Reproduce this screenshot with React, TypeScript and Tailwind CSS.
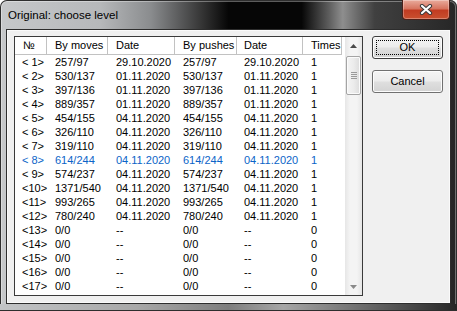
import React from 'react';

type Row = { no: string; moves: string; mDate: string; pushes: string; pDate: string; times: string; sel?: boolean };

const rows: Row[] = [
  { no: '< 1>', moves: '257/97', mDate: '29.10.2020', pushes: '257/97', pDate: '29.10.2020', times: '1' },
  { no: '< 2>', moves: '530/137', mDate: '01.11.2020', pushes: '530/137', pDate: '01.11.2020', times: '1' },
  { no: '< 3>', moves: '397/136', mDate: '01.11.2020', pushes: '397/136', pDate: '01.11.2020', times: '1' },
  { no: '< 4>', moves: '889/357', mDate: '01.11.2020', pushes: '889/357', pDate: '01.11.2020', times: '1' },
  { no: '< 5>', moves: '454/155', mDate: '04.11.2020', pushes: '454/155', pDate: '04.11.2020', times: '1' },
  { no: '< 6>', moves: '326/110', mDate: '04.11.2020', pushes: '326/110', pDate: '04.11.2020', times: '1' },
  { no: '< 7>', moves: '319/110', mDate: '04.11.2020', pushes: '319/110', pDate: '04.11.2020', times: '1' },
  { no: '< 8>', moves: '614/244', mDate: '04.11.2020', pushes: '614/244', pDate: '04.11.2020', times: '1', sel: true },
  { no: '< 9>', moves: '574/237', mDate: '04.11.2020', pushes: '574/237', pDate: '04.11.2020', times: '1' },
  { no: '<10>', moves: '1371/540', mDate: '04.11.2020', pushes: '1371/540', pDate: '04.11.2020', times: '1' },
  { no: '<11>', moves: '993/265', mDate: '04.11.2020', pushes: '993/265', pDate: '04.11.2020', times: '1' },
  { no: '<12>', moves: '780/240', mDate: '04.11.2020', pushes: '780/240', pDate: '04.11.2020', times: '1' },
  { no: '<13>', moves: '0/0', mDate: '--', pushes: '0/0', pDate: '--', times: '0' },
  { no: '<14>', moves: '0/0', mDate: '--', pushes: '0/0', pDate: '--', times: '0' },
  { no: '<15>', moves: '0/0', mDate: '--', pushes: '0/0', pDate: '--', times: '0' },
  { no: '<16>', moves: '0/0', mDate: '--', pushes: '0/0', pDate: '--', times: '0' },
  { no: '<17>', moves: '0/0', mDate: '--', pushes: '0/0', pDate: '--', times: '0' },
];

const headers = [
  { label: '№', pad: 'pl-[8px]' },
  { label: 'By moves', pad: 'pl-[8px]' },
  { label: 'Date', pad: 'pl-[8px]' },
  { label: 'By pushes', pad: 'pl-[8px]' },
  { label: 'Date', pad: 'pl-[7px]' },
  { label: 'Times', pad: 'pl-[8px]' },
];

const grid = 'grid grid-cols-[32px_61px_67px_62px_66px_39px]';

function Scrollbar() {
  return (
    <div className="flex w-[17px] flex-col bg-[linear-gradient(to_right,#e6e6e6,#f4f4f4_30%,#f4f4f4_70%,#e6e6e6)]">
      <div className="flex h-[18px] items-center justify-center">
        <svg width="7" height="4" viewBox="0 0 7 4">
          <path d="M3.5 0 L7 4 L0 4 Z" fill="#4a4a4a" />
        </svg>
      </div>
      <div className="flex-1 px-[1px] pt-[1px]">
        <div className="flex h-[39px] flex-col items-center justify-center gap-[1px] rounded-[2px] border border-[#a4a4a4] bg-[linear-gradient(to_right,#f4f4f4,#ececec_50%,#dcdcdc)] shadow-[inset_0_0_0_1px_#fbfbfb]">
          <div className="h-px w-[6px] bg-[#9a9a9a]" />
          <div className="h-px w-[6px] bg-[#9a9a9a]" />
          <div className="h-px w-[6px] bg-[#9a9a9a]" />
          <div className="h-px w-[6px] bg-[#9a9a9a]" />
        </div>
      </div>
      <div className="flex h-[17px] items-center justify-center">
        <svg width="7" height="4" viewBox="0 0 7 4">
          <path d="M0 0 L7 0 L3.5 4 Z" fill="#8a8a8a" />
        </svg>
      </div>
    </div>
  );
}

function Button({ label, isDefault }: { label: string; isDefault?: boolean }) {
  return (
    <div
      className={`relative flex h-[23px] w-[71px] items-center justify-center rounded-[3px] border bg-[linear-gradient(#f4f4f4,#ececec_48%,#dfdfdf_52%,#d3d3d3)] shadow-[inset_0_0_0_1px_#fcfcfc] ${
        isDefault ? 'border-[#3e3e3e]' : 'border-[#707070]'
      }`}
    >
      {isDefault && <div className="absolute inset-[3px] border border-dotted border-black" />}
      <span className="text-[11px] text-black">{label}</span>
    </div>
  );
}

export default function App() {
  return (
    <div className="h-[311px] w-[457px] overflow-hidden bg-white font-['Liberation_Sans',Arial,sans-serif]">
      <div className="flex h-[311px] w-[457px] flex-col rounded-t-[7px] bg-[linear-gradient(to_right,#c6c8ca_0%,#b6b8ba_22%,#8a8c8e_33%,#363636_44%,#060606_50%,#060606_66%,#5e5e5e_72%,#8e8e8e_75%,#404040_82%,#262626_100%)] px-[6px] shadow-[inset_0_0_0_1px_#2e2e2e,inset_0_0_0_2px_rgba(255,255,255,0.35)]">
        {/* Title bar */}
        <div className="flex h-[29px] shrink-0 items-start justify-between pl-[2px] pr-[1px]">
          <span className="mt-[8px] text-[11.5px] leading-[14px] text-black">Original: choose level</span>
          <div className="flex h-[20px] w-[48px] items-center justify-center rounded-b-[4px] border border-t-0 border-[#4b2019] bg-[linear-gradient(#e9ab9c,#d77560_45%,#c23c22_55%,#c9502f)] shadow-[inset_0_0_0_1px_rgba(255,255,255,0.3)]">
            <svg width="14" height="11" viewBox="0 0 14 11">
              <path d="M3 2 L11 9 M11 2 L3 9" stroke="#3a3a3a" strokeWidth="4.2" strokeLinecap="round" />
              <path d="M3 2 L11 9 M11 2 L3 9" stroke="#ffffff" strokeWidth="2.2" strokeLinecap="round" />
            </svg>
          </div>
        </div>

        {/* Client area */}
        <div className="flex h-[275px] shrink-0 gap-[9px] border border-[#2d2d2d] bg-[#f0f0f0] px-[7px] pt-[6px] shadow-[inset_0_0_0_1px_#fafafa]">
          {/* List */}
          <div className="flex h-[260px] w-[349px] border border-[#3a3a3a] bg-white">
            <div className="flex w-[330px] flex-col text-[11px] text-black">
              <div className={`${grid} h-[18px]`}>
                {headers.map((h, i) => (
                  <div
                    key={i}
                    className={`flex items-center border-r border-b border-[#c2c2c2] leading-none ${h.pad}`}
                  >
                    {h.label}
                  </div>
                ))}
              </div>
              {rows.map((r) => (
                <div
                  key={r.no}
                  className={`${grid} h-[14px] items-center leading-[14px] whitespace-pre ${
                    r.sel ? 'text-[#0b64c8]' : 'text-black'
                  }`}
                >
                  <span className="pl-[7px]">{r.no}</span>
                  <span className="pl-[8px]">{r.moves}</span>
                  <span className="pl-[8px]">{r.mDate}</span>
                  <span className="pl-[8px]">{r.pushes}</span>
                  <span className="pl-[7px]">{r.pDate}</span>
                  <span className="pl-[8px]">{r.times}</span>
                </div>
              ))}
            </div>
            <div className="w-[0px] flex-1 border-b border-[#c2c2c2] h-[18px]" />
            <Scrollbar />
          </div>

          {/* Buttons */}
          <div className="flex flex-col gap-[11px]">
            <Button label="OK" isDefault />
            <Button label="Cancel" />
          </div>
        </div>

        {/* Bottom frame */}
        <div className="-mx-[6px] h-[7px] shrink-0 bg-[linear-gradient(to_right,#c2c4c6_0%,#a8a8a8_30%,#7e7e7e_50%,#a6a6a6_62%,#6a6a6a_80%,#262626_100%)] shadow-[inset_0_-1px_0_#2e2e2e]" />
      </div>
    </div>
  );
}
